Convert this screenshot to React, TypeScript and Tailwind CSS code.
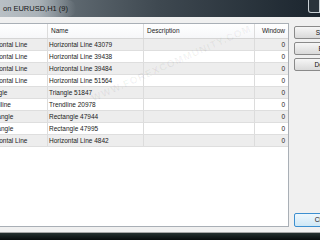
import React from "react";

interface Row {
  type: string;
  name: string;
  description: string;
  window: number;
}

const rows: Row[] = [
  { type: "Horizontal Line", name: "Horizontal Line 43079", description: "", window: 0 },
  { type: "Horizontal Line", name: "Horizontal Line 39438", description: "", window: 0 },
  { type: "Horizontal Line", name: "Horizontal Line 39484", description: "", window: 0 },
  { type: "Horizontal Line", name: "Horizontal Line 51564", description: "", window: 0 },
  { type: "Triangle", name: "Triangle 51847", description: "", window: 0 },
  { type: "Trendline", name: "Trendline 20978", description: "", window: 0 },
  { type: "Rectangle", name: "Rectangle 47944", description: "", window: 0 },
  { type: "Rectangle", name: "Rectangle 47995", description: "", window: 0 },
  { type: "Horizontal Line", name: "Horizontal Line 4842", description: "", window: 0 },
];

function WinButton({ label, focused }: { label: string; focused?: boolean }) {
  return (
    <button
      className={
        focused
          ? "h-[14px] w-[58px] shrink-0 rounded-[2px] border border-[#3c8fd0] bg-gradient-to-b from-[#eef7fd] to-[#cfe8f6] text-[6.5px] text-[#111]"
          : "h-[13px] w-[60px] shrink-0 rounded-[2px] border border-[#8a8a8a] bg-gradient-to-b from-[#f6f6f6] to-[#dadada] text-[6.5px] text-[#111]"
      }
    >
      {label}
    </button>
  );
}

export default function App() {
  return (
    <div className="w-[320px] h-[240px] overflow-hidden flex flex-col bg-[#f0f0f0] font-['Liberation_Sans',Arial,sans-serif] text-[6.5px] text-[#1a1a1a]">
      {/* title bar */}
      <div className="h-[17px] shrink-0 flex items-start justify-between bg-gradient-to-r from-[#7a848b] via-[#3e4850] to-[#1b252e]">
        <div className="h-full flex items-center pl-[3px] pr-[8px] rounded-r-full bg-gradient-to-r from-[#b9c0c5] via-[#aab2b8] to-transparent">
          <span className="text-[7.5px] text-[#151515]">on EURUSD,H1 (9)</span>
        </div>
        <div className="w-[12px] h-[13px] border border-t-0 border-[#c9d0d5] rounded-bl-[3px] bg-[#2a343c]" />
      </div>

      {/* body */}
      <div className="flex-1 flex pt-[6px] pb-[5px] min-h-0">
        <div className="-ml-[19px] w-[308px] shrink-0 border border-[#a9afb6] bg-white flex flex-col">
          <div className="h-[15px] shrink-0 flex border-b border-[#d5d5d5] bg-gradient-to-b from-white to-[#f6f7f9]">
            <div className="w-[66px] border-r border-[#dcdcdc] pl-[3px] flex items-center">Type</div>
            <div className="w-[96px] border-r border-[#dcdcdc] pl-[3px] flex items-center">Name</div>
            <div className="w-[111px] border-r border-[#dcdcdc] pl-[3px] flex items-center">Description</div>
            <div className="w-[33px] pr-[3px] flex items-center justify-end">Window</div>
          </div>
          <div className="relative flex-1">
            {rows.map((r, i) => (
              <div
                key={r.name}
                className={
                  i % 2 === 0
                    ? "h-[12px] flex border-b border-[#dedede] bg-[#ededed]"
                    : "h-[12px] flex border-b border-[#dedede] bg-white"
                }
              >
                <div className="w-[66px] border-r border-[#dcdcdc] pl-[2px] flex items-center whitespace-nowrap">{r.type}</div>
                <div className="w-[96px] border-r border-[#dcdcdc] pl-[1px] flex items-center whitespace-nowrap">{r.name}</div>
                <div className="w-[111px] border-r border-[#dcdcdc] pl-[3px] flex items-center">{r.description}</div>
                <div className="w-[33px] pr-[3px] flex items-center justify-end">{r.window}</div>
              </div>
            ))}
            <span className="absolute left-[110px] top-[52px] -rotate-[24deg] origin-left text-[10px] font-bold tracking-[1px] text-[#000]/[0.06] whitespace-nowrap">
              WWW.FOREXCOMMUNITY.COM
            </span>
          </div>
        </div>

        <div className="ml-[5px] flex flex-col gap-[3px] pt-[3px]">
          <WinButton label="Show" />
          <WinButton label="Edit" />
          <WinButton label="Delete" />
          <div className="mt-auto">
            <WinButton label="Close" focused />
          </div>
        </div>
      </div>

      {/* bottom strip */}
      <div className="h-[8px] shrink-0 border-t border-[#a6a6a6] bg-gradient-to-b from-[#24302f] to-[#070b0c]" />
    </div>
  );
}
